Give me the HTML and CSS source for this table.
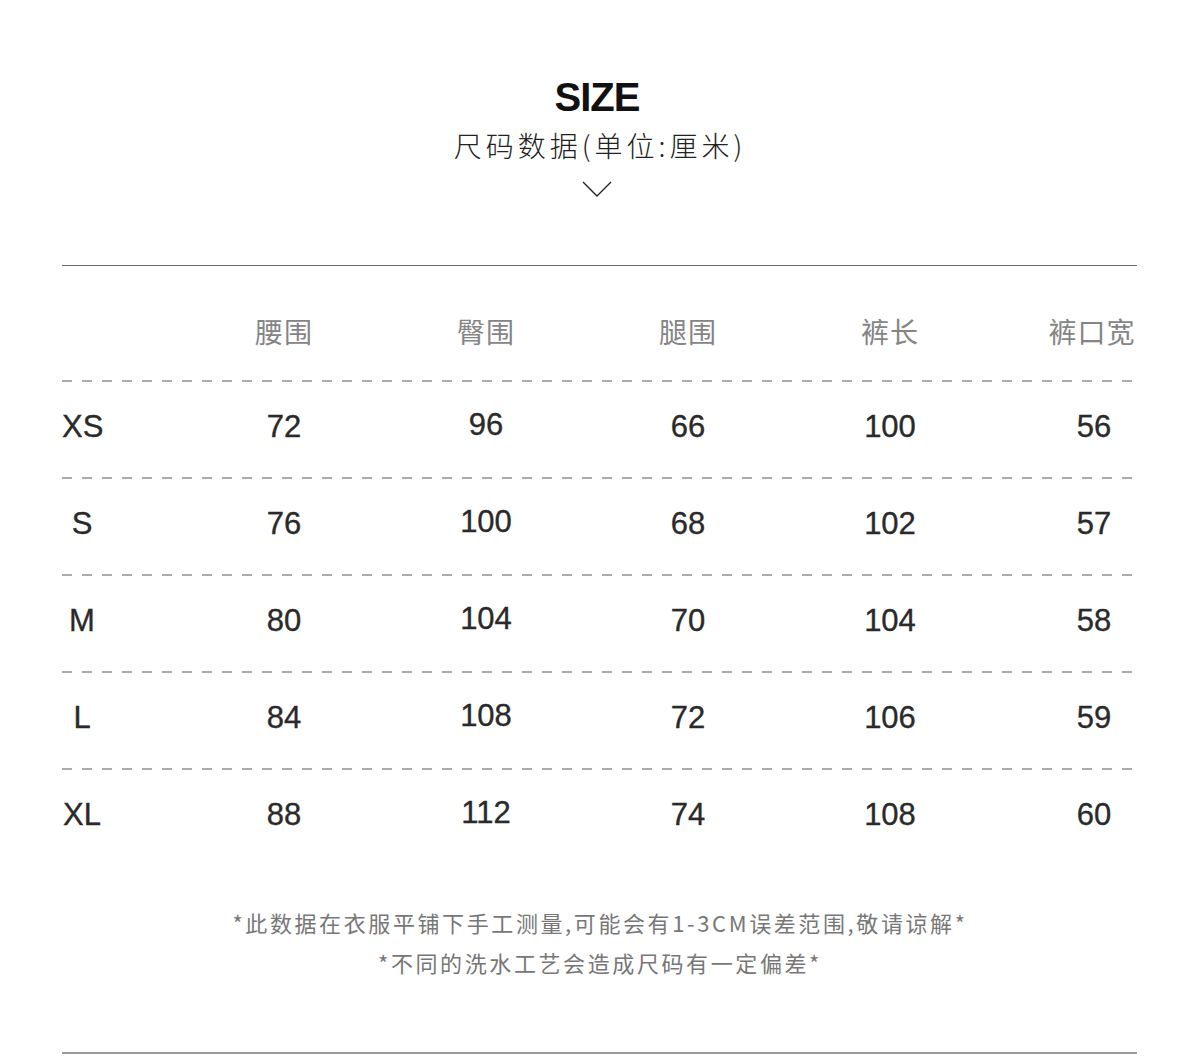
FILE: index.html
```html
<!DOCTYPE html>
<html lang="zh-CN">
<head>
<meta charset="utf-8">
<title>SIZE</title>
<link rel="stylesheet" href="styles.css">
</head>
<body>
<div class="page">
  <header class="head">
    <h1 class="title">SIZE</h1>
    <p class="subtitle">尺码数据(单位:厘米)</p>
    <svg class="chevron" width="30" height="17" viewBox="0 0 30 17"><polyline points="1,1 15,15 29,1" fill="none" stroke="#222" stroke-width="1.4"/></svg>
  </header>
  <div class="rule"></div>
  <div class="table">
    <div class="row row-head">
      <span class="label"></span>
      <span>腰围</span><span>臀围</span><span>腿围</span><span>裤长</span><span>裤口宽</span>
    </div>
    <div class="dash"></div>
    <div class="row"><span class="label">XS</span><span>72</span><span class="up">96</span><span>66</span><span>100</span><span class="last">56</span></div>
    <div class="dash"></div>
    <div class="row"><span class="label">S</span><span>76</span><span class="up">100</span><span>68</span><span>102</span><span class="last">57</span></div>
    <div class="dash"></div>
    <div class="row"><span class="label">M</span><span>80</span><span class="up">104</span><span>70</span><span>104</span><span class="last">58</span></div>
    <div class="dash"></div>
    <div class="row"><span class="label">L</span><span>84</span><span class="up">108</span><span>72</span><span>106</span><span class="last">59</span></div>
    <div class="dash"></div>
    <div class="row"><span class="label">XL</span><span>88</span><span class="up">112</span><span>74</span><span>108</span><span class="last">60</span></div>
  </div>
  <div class="notes">
    <p>*此数据在衣服平铺下手工测量,可能会有1-3CM误差范围,敬请谅解*</p>
    <p>*不同的洗水工艺会造成尺码有一定偏差*</p>
  </div>
  <div class="rule rule-bottom"></div>
</div>
</body>
</html>
```

FILE: styles.css
```css
html, body {
  margin: 0;
  padding: 0;
  background: #fff;
}
.page {
  width: 1200px;
  font-family: "Liberation Sans", "Noto Sans CJK SC", sans-serif;
}
.head {
  display: flex;
  flex-direction: column;
  align-items: center;
  padding-top: 73px;
}
.title {
  margin: 0;
  padding-right: 6px;
  font-size: 40px;
  line-height: 48px;
  font-weight: 700;
  letter-spacing: -1px;
  color: #111;
}
.subtitle {
  margin: 4px 0 0;
  font-family: "Noto Sans CJK SC", sans-serif;
  font-size: 28px;
  line-height: 40px;
  font-weight: 300;
  letter-spacing: 4px;
  color: #222;
}
.chevron {
  display: block;
  margin: 16px 6px 0 0;
}
.rule {
  margin: 67px 0 0 62px;
  width: 1075px;
  height: 1px;
  background: #6b6b6b;
}
.table {
  margin-left: 62px;
  width: 1075px;
}
.row {
  box-sizing: border-box;
  display: grid;
  grid-template-columns: 121px repeat(5, 202px);
  align-items: center;
  justify-items: center;
  height: 95px;
  padding-bottom: 5px;
  font-size: 31px;
  color: #2a2a2a;
  -webkit-text-stroke: 0.35px #2a2a2a;
}
.row .label {
  justify-self: start;
  width: 40px;
  text-align: center;
}
.row .up {
  position: relative;
  top: -2px;
}
.row .last {
  position: relative;
  left: 2px;
}
.row-head {
  height: 114px;
  padding-top: 15px;
  padding-bottom: 0;
  font-family: "Noto Sans CJK SC", sans-serif;
  font-size: 28px;
  letter-spacing: 1px;
  color: #858585;
  -webkit-text-stroke: 0;
}
.dash {
  height: 2px;
  background: repeating-linear-gradient(to right, #ababab 0 10px, transparent 10px 20px);
}
.notes {
  margin-top: 37px;
  text-align: center;
  font-family: "Noto Sans CJK SC", sans-serif;
  font-size: 22px;
  line-height: 40px;
  letter-spacing: 2.6px;
  color: #777;
}
.notes p {
  margin: 0;
}
.rule-bottom {
  margin-top: 70px;
  height: 2px;
  background: #9a9a9a;
}
```
